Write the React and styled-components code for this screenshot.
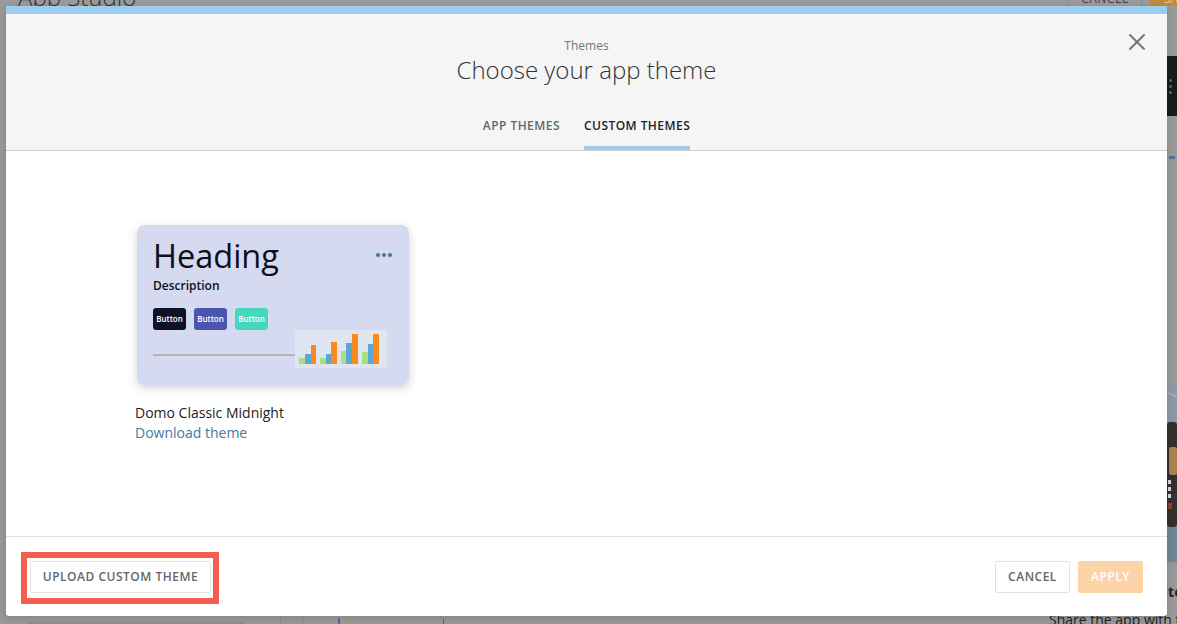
import React from 'react';
import styled, { createGlobalStyle } from 'styled-components';
import { X } from 'lucide-react';

const GlobalStyle = createGlobalStyle`
  html, body { margin: 0; height: 100%; }
  body { font-family: "Open Sans", "Noto Sans", sans-serif; background: #999; overflow: hidden; }
  * { box-sizing: border-box; }
`

const Page = styled.div`
  position: relative;
  width: 1177px;
  height: 624px;
  overflow: hidden;
  background: #999;
`

const TopBar = styled.div`
  display: flex;
  align-items: flex-end;
  height: 18px;
  margin-top: -12px;
  background: #9b9b9b;
`

const AppTitle = styled.div`
  flex: 1;
  padding-left: 18px;
  font-size: 24px;
  line-height: 18px;
  font-weight: 300;
  color: #333;
  white-space: nowrap;
`

const TopCancel = styled.div`
  width: 74px;
  height: 18px;
  border-left: 1px solid #8c8c8c;
  border-right: 1px solid #8c8c8c;
  font-size: 12px;
  line-height: 22px;
  letter-spacing: 0.5px;
  text-align: center;
  color: #444;
`

const TopSave = styled.div`
  width: 27px;
  margin-left: 8px;
  height: 18px;
  padding-left: 14px;
  background: #c48a38;
  font-size: 12px;
  line-height: 22px;
  color: #d9c6a5;
  overflow: hidden;
`

const BackBody = styled.div`
  display: flex;
  height: 618px;
  padding-top: 50px;
`

const BottomStrip = styled.div`
  flex: 1;
  display: flex;
  align-self: flex-end;
  align-items: flex-end;
  height: 8px;
`

const StripMark = styled.span`
  width: ${p => p.$width}px;
  height: ${p => p.$height}px;
  margin-left: ${p => p.$left}px;
  background: ${p => p.$color};
`

const SideColumn = styled.div`
  display: flex;
  flex-direction: column;
  align-items: flex-end;
  width: 128px;
`

const DarkBand = styled.div`
  display: flex;
  flex-direction: column;
  flex-shrink: 0;
  justify-content: center;
  align-items: flex-end;
  gap: 3px;
  width: 100%;
  height: 60px;
  padding-right: 5px;
  background: #1b1b1b;
`

const BandDot = styled.span`
  width: 3px;
  height: 3px;
  border-radius: 50%;
  background: #666;
`

const BlueMark = styled.div`
  flex-shrink: 0;
  width: 6px;
  height: 3px;
  margin: 40px 2px 0 0;
  background: #4f6f9c;
`

const Portrait = styled.svg`
  display: block;
  flex-shrink: 0;
  width: 10px;
  height: 177px;
  margin-top: 226px;
`

const SideHeading = styled.div`
  flex-shrink: 0;
  align-self: flex-start;
  margin: 22px 0 0 93px;
  font-size: 14px;
  line-height: 16px;
  font-weight: 700;
  color: #222;
`

const ShareText = styled.div`
  flex-shrink: 0;
  align-self: flex-start;
  margin-top: 12px;
  font-size: 14px;
  line-height: 16px;
  color: #222;
  white-space: nowrap;
`

const Modal = styled.div`
  position: absolute;
  top: 6px;
  left: 6px;
  display: flex;
  flex-direction: column;
  width: 1161px;
  height: 610px;
  background: #fff;
  border-radius: 0 0 3px 3px;
  overflow: hidden;
  box-shadow: 0 2px 8px rgba(0, 0, 0, 0.15);
`

const Header = styled.header`
  position: relative;
  display: flex;
  flex-direction: column;
  align-items: center;
  height: 145px;
  padding-top: 24px;
  background: #f5f5f5;
  border-top: 8px solid #9bcdee;
  border-bottom: 1px solid #cfcfcf;
`

const Eyebrow = styled.div`
  font-size: 12px;
  line-height: 16px;
  color: #777;
`

const Title = styled.h1`
  margin: 0;
  font-size: 24px;
  line-height: 32px;
  font-weight: 300;
  color: #333;
`

const CloseButton = styled.button`
  position: absolute;
  top: 14px;
  right: 16px;
  display: flex;
  padding: 0;
  border: 0;
  background: none;
  color: #777;
`

const Tabs = styled.nav`
  display: flex;
  gap: 24px;
  margin-top: auto;
`

const Tab = styled.div`
  height: 36px;
  padding-top: 4px;
  border-bottom: 4px solid ${p => (p.$active ? '#9fcde8' : 'transparent')};
  font-size: 12px;
  line-height: 16px;
  font-weight: 600;
  letter-spacing: 0.45px;
  color: ${p => (p.$active ? '#222' : '#666')};
`

const Content = styled.main`
  flex: 1;
  padding: 74px 0 0 129px;
`

const ThemeItem = styled.div`
  display: flex;
  flex-direction: column;
  width: 280px;
`

const ThemeCard = styled.div`
  display: flex;
  flex-direction: column;
  width: 272px;
  height: 160px;
  margin-left: 2px;
  padding: 12px 16px 0;
  border-radius: 8px;
  background: #d5daf1;
  box-shadow: 0 3px 10px rgba(0, 0, 0, 0.18);
`

const CardTop = styled.div`
  display: flex;
  justify-content: space-between;
  align-items: center;
`

const Heading = styled.div`
  margin-top: -1px;
  margin-bottom: 1px;
  font-size: 32.5px;
  line-height: 40px;
  color: #0c0f1c;
`

const Dots = styled.div`
  display: flex;
  gap: 2px;
  margin: -4px 1px 0 0;
`

const Dot = styled.span`
  width: 4px;
  height: 4px;
  border-radius: 50%;
  background: #3e74a8;
`

const Description = styled.div`
  margin-top: 1px;
  font-size: 12px;
  line-height: 16px;
  font-weight: 600;
  color: #0c0f1c;
`

const MiniButtons = styled.div`
  display: flex;
  gap: 8px;
  margin-top: 14px;
`

const MiniButton = styled.div`
  width: 33px;
  height: 22px;
  border-radius: 3px;
  background: ${p => p.$color};
  font-size: 8px;
  line-height: 22px;
  font-weight: 600;
  text-align: center;
  color: #fff;
`

const CardBottom = styled.div`
  display: flex;
  align-items: flex-end;
`

const Rule = styled.div`
  flex: 1;
  height: 2px;
  margin-bottom: 12px;
  background: #b2b4b8;
`

const Chart = styled.svg`
  display: block;
  width: 92px;
  height: 38px;
  margin-right: 6px;
`

const ThemeName = styled.div`
  margin-top: 18px;
  font-size: 14px;
  line-height: 20px;
  color: #222;
`

const ThemeLink = styled.a`
  font-size: 14px;
  line-height: 20px;
  color: #3d7ca3;
`

const Footer = styled.footer`
  display: flex;
  align-items: center;
  justify-content: space-between;
  height: 80px;
  padding: 0 24px 0 15px;
  border-top: 1px solid #e2e2e2;
`

const Highlight = styled.div`
  display: flex;
  margin-top: 2px;
  padding: 3px 2px 5px 3px;
  border: 6px solid #f55d4e;
`

const FooterActions = styled.div`
  display: flex;
  gap: 8px;
`

const ActionButton = styled.button`
  height: 32px;
  width: ${p => p.$width}px;
  padding: 0;
  border: 1px solid ${p => (p.$primary ? '#fdd3a8' : '#e2e2e2')};
  border-radius: 2px;
  background: ${p => (p.$primary ? '#fdd3a8' : '#fff')};
  font-family: inherit;
  font-size: 12px;
  font-weight: 600;
  letter-spacing: 0.5px;
  color: ${p => (p.$primary ? '#fff' : '#666')};
`

const bars = [
  [4, 6, 28], [10, 6, 24], [16, 5, 15],
  [25, 6, 28], [31, 5, 24], [36, 6, 12],
  [46, 5, 21], [51, 6, 13], [57, 6, 4],
  [67, 6, 22], [73, 5, 14], [78, 6, 4],
]
const barColors = ['#a9e07f', '#5ba7d4', '#f98a1f']

const ChartIcon = () => (
  <Chart viewBox="0 0 92 38">
    <rect width="92" height="38" fill="#dfe6f2" />
    { bars.map(([x, w, y], i) => (
      <rect key={ i } x={ x } y={ y } width={ w } height={ 34 - y } fill={ barColors[i % 3] } />
    ))}
  </Chart>
)

const PortraitArt = () => (
  <Portrait viewBox="0 0 10 177">
    <rect width="10" height="177" fill="#8d9aa5" />
    <path d="M0 7 L10 12" stroke="#a3adb5" strokeWidth="2" />
    <rect x="0" y="37" width="10" height="105" rx="3" fill="#34302e" />
    <rect x="2" y="62" width="8" height="28" rx="2" fill="#a9834f" />
    <rect x="1" y="95" width="3" height="4" fill="#d8d8d8" />
    <rect x="1" y="102" width="3" height="4" fill="#d8d8d8" />
    <rect x="1" y="109" width="3" height="4" fill="#d8d8d8" />
    <rect x="1" y="118" width="4" height="6" fill="#9a3d2e" />
    <rect x="0" y="142" width="10" height="35" fill="#6f8796" />
  </Portrait>
)

const App = () => {
  return (
    <Page>
      <GlobalStyle />
      <TopBar>
        <AppTitle>App Studio</AppTitle>
        <TopCancel>CANCEL</TopCancel>
        <TopSave>SAVE</TopSave>
      </TopBar>
      <BackBody>
        <BottomStrip>
          <StripMark $left={ 27 } $width={ 218 } $height={ 2 } $color="#8e8e8e" />
          <StripMark $left={ 35 } $width={ 1 } $height={ 8 } $color="#8c8c8c" />
          <StripMark $left={ 21 } $width={ 1 } $height={ 8 } $color="#8c8c8c" />
          <StripMark $left={ 35 } $width={ 2 } $height={ 6 } $color="#4f6f9c" />
          <StripMark $left={ 103 } $width={ 1 } $height={ 5 } $color="#666" />
        </BottomStrip>
        <SideColumn>
          <DarkBand>
            <BandDot />
            <BandDot />
            <BandDot />
          </DarkBand>
          <BlueMark />
          <PortraitArt />
          <SideHeading>Invite</SideHeading>
          <ShareText>Share the app with team</ShareText>
        </SideColumn>
      </BackBody>
      <Modal>
        <Header>
          <Eyebrow>Themes</Eyebrow>
          <Title>Choose your app theme</Title>
          <CloseButton aria-label="Close">
            <X size={ 28 } strokeWidth={ 1.7 } />
          </CloseButton>
          <Tabs>
            <Tab>APP THEMES</Tab>
            <Tab $active>CUSTOM THEMES</Tab>
          </Tabs>
        </Header>
        <Content>
          <ThemeItem>
            <ThemeCard>
              <CardTop>
                <Heading>Heading</Heading>
                <Dots>
                  <Dot />
                  <Dot />
                  <Dot />
                </Dots>
              </CardTop>
              <Description>Description</Description>
              <MiniButtons>
                <MiniButton $color="#0e1226">Button</MiniButton>
                <MiniButton $color="#4b55b0">Button</MiniButton>
                <MiniButton $color="#45d9bc">Button</MiniButton>
              </MiniButtons>
              <CardBottom>
                <Rule />
                <ChartIcon />
              </CardBottom>
            </ThemeCard>
            <ThemeName>Domo Classic Midnight</ThemeName>
            <ThemeLink>Download theme</ThemeLink>
          </ThemeItem>
        </Content>
        <Footer>
          <Highlight>
            <ActionButton $width={ 181 }>UPLOAD CUSTOM THEME</ActionButton>
          </Highlight>
          <FooterActions>
            <ActionButton $width={ 75 }>CANCEL</ActionButton>
            <ActionButton $width={ 65 } $primary>APPLY</ActionButton>
          </FooterActions>
        </Footer>
      </Modal>
    </Page>
  )
}

export default App
